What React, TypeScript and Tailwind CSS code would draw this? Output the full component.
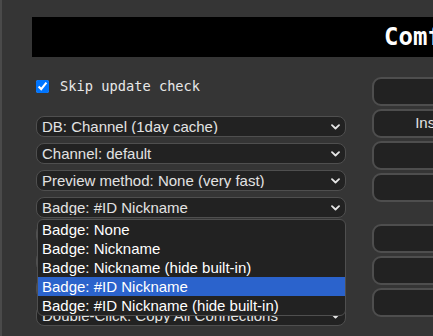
import { useState } from 'react';

const selects = [
  'DB: Channel (1day cache)',
  'Channel: default',
  'Preview method: None (very fast)',
  'Badge: #ID Nickname',
  'Default UI: None',
  'Share: None',
  'Component: Use workflow version',
  'Double-Click: Copy All Connections',
];

const badgeOptions = [
  'Badge: None',
  'Badge: Nickname',
  'Badge: Nickname (hide built-in)',
  'Badge: #ID Nickname',
  'Badge: #ID Nickname (hide built-in)',
];

const buttonsTop = ['Custom Nodes Manager', 'Install Missing Custom Nodes', 'Model Manager', 'Install via Git URL'];
const buttonsBottom = ['Update All', 'Update ComfyUI', 'Fetch Updates'];

function Chevron() {
  return (
    <svg width="9" height="6" viewBox="0 0 9 6" className="shrink-0">
      <path d="M1 1.2 L4.5 4.5 L8 1.2" fill="none" stroke="#e6e6e6" strokeWidth="1.8" strokeLinecap="round" strokeLinejoin="round" />
    </svg>
  );
}

function FakeSelect({ label }: { label: string }) {
  return (
    <div className="h-[21px] flex items-center pl-[5px] pr-[5px] rounded-[8px] border border-[#4f4f4f] bg-[#222222] text-[#e2e2e2] text-[15px] leading-none">
      <span className="flex-1 truncate">{label}</span>
      <Chevron />
    </div>
  );
}

function MenuButton({ label }: { label: string }) {
  return (
    <div className="h-[29px] w-[284px] flex items-center justify-center rounded-[9px] border-2 border-[#4e4e4e] bg-[#222222] text-[#e2e2e2] text-[15px] whitespace-nowrap">
      {label}
    </div>
  );
}

export default function App() {
  const [skip, setSkip] = useState(true);
  const active = 3;

  return (
    <div className="w-[433px] h-[336px] overflow-hidden bg-[#353535] flex" style={{ fontFamily: '"Liberation Sans", Arial, sans-serif' }}>
      <div className="w-[2px] shrink-0 bg-[#4a4a4a]" />
      <div className="shrink-0 pl-[30px] pt-[17px]">
        <div
          className="h-[40px] w-[900px] bg-black text-white font-bold text-[24px] flex items-center pl-[352px]"
          style={{ fontFamily: '"DejaVu Sans Mono", monospace' }}
        >
          ComfyUI Manager
        </div>

        <div className="flex mt-[20px]">
          <div className="w-[310px] ml-[4px] flex flex-col">
            <label
              className="h-[16px] mt-[1px] flex items-center gap-[11px] text-[#e8e8e8] text-[13.7px]"
              style={{ fontFamily: '"DejaVu Sans Mono", monospace' }}
            >
              <input
                type="checkbox"
                checked={skip}
                onChange={(e) => setSkip(e.target.checked)}
                className="m-0 w-[13px] h-[13px]"
              />
              Skip update check
            </label>

            <div className="relative mt-[22px] flex flex-col gap-[6px]">
              {selects.map((s) => (
                <FakeSelect key={s} label={s} />
              ))}

              {/* open badge dropdown */}
              <div className="absolute left-[1px] top-[103px] w-[309px] rounded-[6px] border border-[#4f4f4f] bg-[#222222] overflow-hidden">
                {badgeOptions.map((o, i) => (
                  <div
                    key={o}
                    className={
                      'h-[19px] flex items-center pl-[4px] text-[15px] text-white leading-none ' +
                      (i === active ? 'bg-[#2b63cc]' : '')
                    }
                  >
                    {o}
                  </div>
                ))}
              </div>
            </div>
          </div>

          <div className="ml-[26px] flex flex-col">
            <div className="flex flex-col gap-[3px]">
              {buttonsTop.map((b) => (
                <MenuButton key={b} label={b} />
              ))}
            </div>
            <div className="flex flex-col gap-[3px] mt-[22px]">
              {buttonsBottom.map((b) => (
                <MenuButton key={b} label={b} />
              ))}
            </div>
          </div>
        </div>
      </div>
    </div>
  );
}
